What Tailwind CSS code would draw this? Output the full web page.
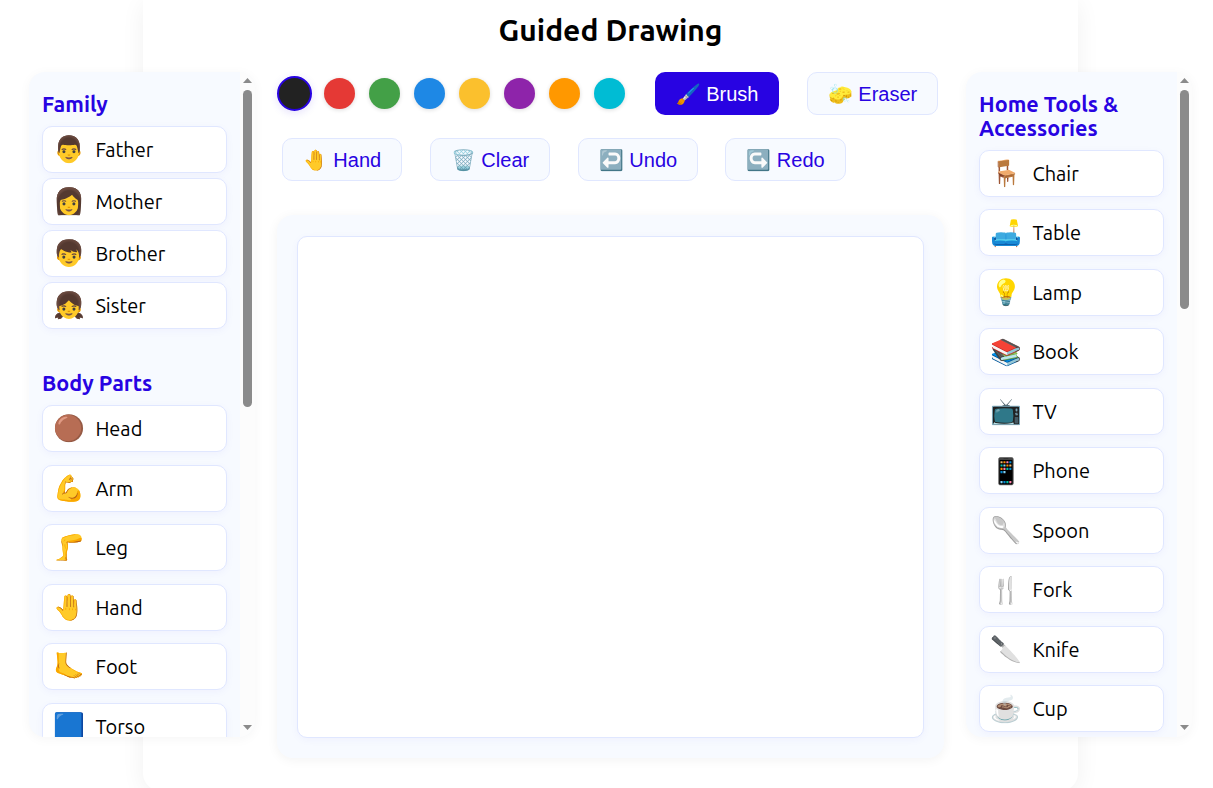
<!DOCTYPE html>
<html lang="en"><head><meta charset="utf-8"><title>Guided Drawing</title>
<script src="https://cdn.jsdelivr.net/npm/@tailwindcss/browser@4"></script></head>
<body class="h-[788px] overflow-hidden bg-white font-[Ubuntu,'Noto_Sans',sans-serif] text-black">
<main class="mx-[143px] h-[791px] w-[935px] rounded-b-[18px] pt-[10px] shadow-[0_4px_24px_rgba(0,0,0,0.06)]">
  <h1 class="h-[61px] text-center text-[30px] leading-[40px] font-semibold whitespace-nowrap">Guided Drawing</h1>
  <div class="-ml-[114px] flex w-[1164px] items-start">

    <aside class="mt-px flex h-[665px] w-[226px] shrink-0 overflow-hidden rounded-2xl bg-[#f7faff] shadow-[0_2px_12px_rgba(0,0,0,0.04)]">
      <div class="w-[211px] pt-[20px] pl-[13px]">
        <h2 class="mb-[10px] text-[21.6px] leading-[24px] font-semibold text-[#2803e2]">Family</h2>
        <ul data-items="👨 Father,👩 Mother,👦 Brother,👧 Sister" class="flex flex-col gap-[5px]"></ul>
        <h2 class="mt-[42px] mb-[10px] text-[21.6px] leading-[24px] font-semibold text-[#2803e2]">Body Parts</h2>
        <ul data-items="🟤 Head,💪 Arm,🦵 Leg,🤚 Hand,🦶 Foot,🟦 Torso" class="flex flex-col gap-[12.5px]"></ul>
      </div>
      <div class="flex w-[15px] flex-col items-center bg-[#fcfcfc] pt-[6px] pb-[7px]">
        <svg class="h-[5px] w-[9px]" viewBox="0 0 9 5"><path d="M0 5 4.5 0 9 5z" fill="#8b8b8b"/></svg>
        <div class="mt-[7px] h-[317px] w-[9px] rounded-full bg-[#8b8b8b]"></div>
        <svg class="mt-auto h-[5px] w-[9px]" viewBox="0 0 9 5"><path d="M0 0 4.5 5 9 0z" fill="#8b8b8b"/></svg>
      </div>
    </aside>

    <section class="ml-[22px] w-[667px] shrink-0">
      <div class="flex h-[45px] items-center">
        <div class="flex items-center gap-[14px] pl-px">
          <span class="-mx-0.5 -ml-px size-[35px] rounded-full border-2 border-[#2803e2] bg-[#222] shadow-[0_2px_8px_rgba(42,0,224,0.12)]"></span>
          <span class="size-[31px] rounded-full bg-[#e53935] shadow-[0_1px_4px_rgba(0,0,0,0.14)]"></span>
          <span class="size-[31px] rounded-full bg-[#43a047] shadow-[0_1px_4px_rgba(0,0,0,0.14)]"></span>
          <span class="size-[31px] rounded-full bg-[#1e88e5] shadow-[0_1px_4px_rgba(0,0,0,0.14)]"></span>
          <span class="size-[31px] rounded-full bg-[#fbc02d] shadow-[0_1px_4px_rgba(0,0,0,0.14)]"></span>
          <span class="size-[31px] rounded-full bg-[#8e24aa] shadow-[0_1px_4px_rgba(0,0,0,0.14)]"></span>
          <span class="size-[31px] rounded-full bg-[#ff9800] shadow-[0_1px_4px_rgba(0,0,0,0.14)]"></span>
          <span class="size-[31px] rounded-full bg-[#00bcd4] shadow-[0_1px_4px_rgba(0,0,0,0.14)]"></span>
        </div>
        <button class="ml-[30px] h-[43px] w-[124px] rounded-[10px] bg-[#2803e2] font-['Liberation_Sans',sans-serif] text-[20px] whitespace-nowrap text-white">🖌️ Brush</button>
        <button class="ml-[28px] h-[43px] w-[131px] rounded-[10px] border border-[#e0e7ff] bg-[#f7faff] font-['Liberation_Sans',sans-serif] text-[20px] whitespace-nowrap text-[#2803e2]">🧽 Eraser</button>
      </div>
      <div class="mt-[22px] ml-[5px] flex gap-[28px] font-['Liberation_Sans',sans-serif] text-[20px] whitespace-nowrap text-[#2803e2]">
        <button class="h-[43px] w-[120px] rounded-[10px] border border-[#e0e7ff] bg-[#f7faff]">🤚 Hand</button>
        <button class="h-[43px] w-[120px] rounded-[10px] border border-[#e0e7ff] bg-[#f7faff]">🗑️ Clear</button>
        <button class="h-[43px] w-[120px] rounded-[10px] border border-[#e0e7ff] bg-[#f7faff]">↩️ Undo</button>
        <button class="-ml-px h-[43px] w-[121px] rounded-[10px] border border-[#e0e7ff] bg-[#f7faff]">↪️ Redo</button>
      </div>
      <div class="mt-[34px] h-[543px] rounded-2xl bg-[#f7faff] px-[20px] pt-[21px] shadow-[0_2px_12px_rgba(0,0,0,0.05)]">
        <div class="h-[502px] rounded-[10px] border border-[#e0e7ff] bg-white shadow-[0_2px_8px_rgba(42,0,224,0.04)]"></div>
      </div>
    </section>

    <aside class="mt-px ml-[22px] flex h-[665px] w-[226px] shrink-0 overflow-hidden rounded-2xl bg-[#f7faff] shadow-[0_2px_12px_rgba(0,0,0,0.04)]">
      <div class="w-[211px] pt-[20px] pl-[13px]">
        <h2 class="mb-[9.8px] text-[21.6px] leading-[24px] font-semibold text-[#2803e2]">Home Tools &amp;<br>Accessories</h2>
        <ul data-items="🪑 Chair,🛋️ Table,💡 Lamp,📚 Book,📺 TV,📱 Phone,🥄 Spoon,🍴 Fork,🔪 Knife,☕ Cup" class="flex flex-col gap-[12.5px]"></ul>
      </div>
      <div class="flex w-[15px] flex-col items-center bg-[#fcfcfc] pt-[6px] pb-[7px]">
        <svg class="h-[5px] w-[9px]" viewBox="0 0 9 5"><path d="M0 5 4.5 0 9 5z" fill="#8b8b8b"/></svg>
        <div class="mt-[7px] h-[219px] w-[9px] rounded-full bg-[#8b8b8b]"></div>
        <svg class="mt-auto h-[5px] w-[9px]" viewBox="0 0 9 5"><path d="M0 0 4.5 5 9 0z" fill="#8b8b8b"/></svg>
      </div>
    </aside>
  </div>
</main>
<template id="item">
  <li class="flex h-[47px] w-[185px] shrink-0 items-center rounded-[10px] border border-[#e0e7ff] bg-white pt-px pl-[10px] text-[20px] leading-[24px] shadow-[0_2px_8px_rgba(42,0,224,0.04)]">
    <span class="mb-[1.6px] w-[32px] text-[25.6px] leading-[30px] whitespace-nowrap"></span><span class="ml-[10.4px]"></span>
  </li>
</template>
<script>
const tpl = document.getElementById('item');
for (const ul of document.querySelectorAll('ul[data-items]'))
  for (const entry of ul.dataset.items.split(',')) {
    const [icon, label] = entry.split(' ');
    const li = tpl.content.cloneNode(true);
    const spans = li.querySelectorAll('span');
    spans[0].textContent = icon;
    spans[1].textContent = label;
    ul.append(li);
  }
</script>
</body></html>
